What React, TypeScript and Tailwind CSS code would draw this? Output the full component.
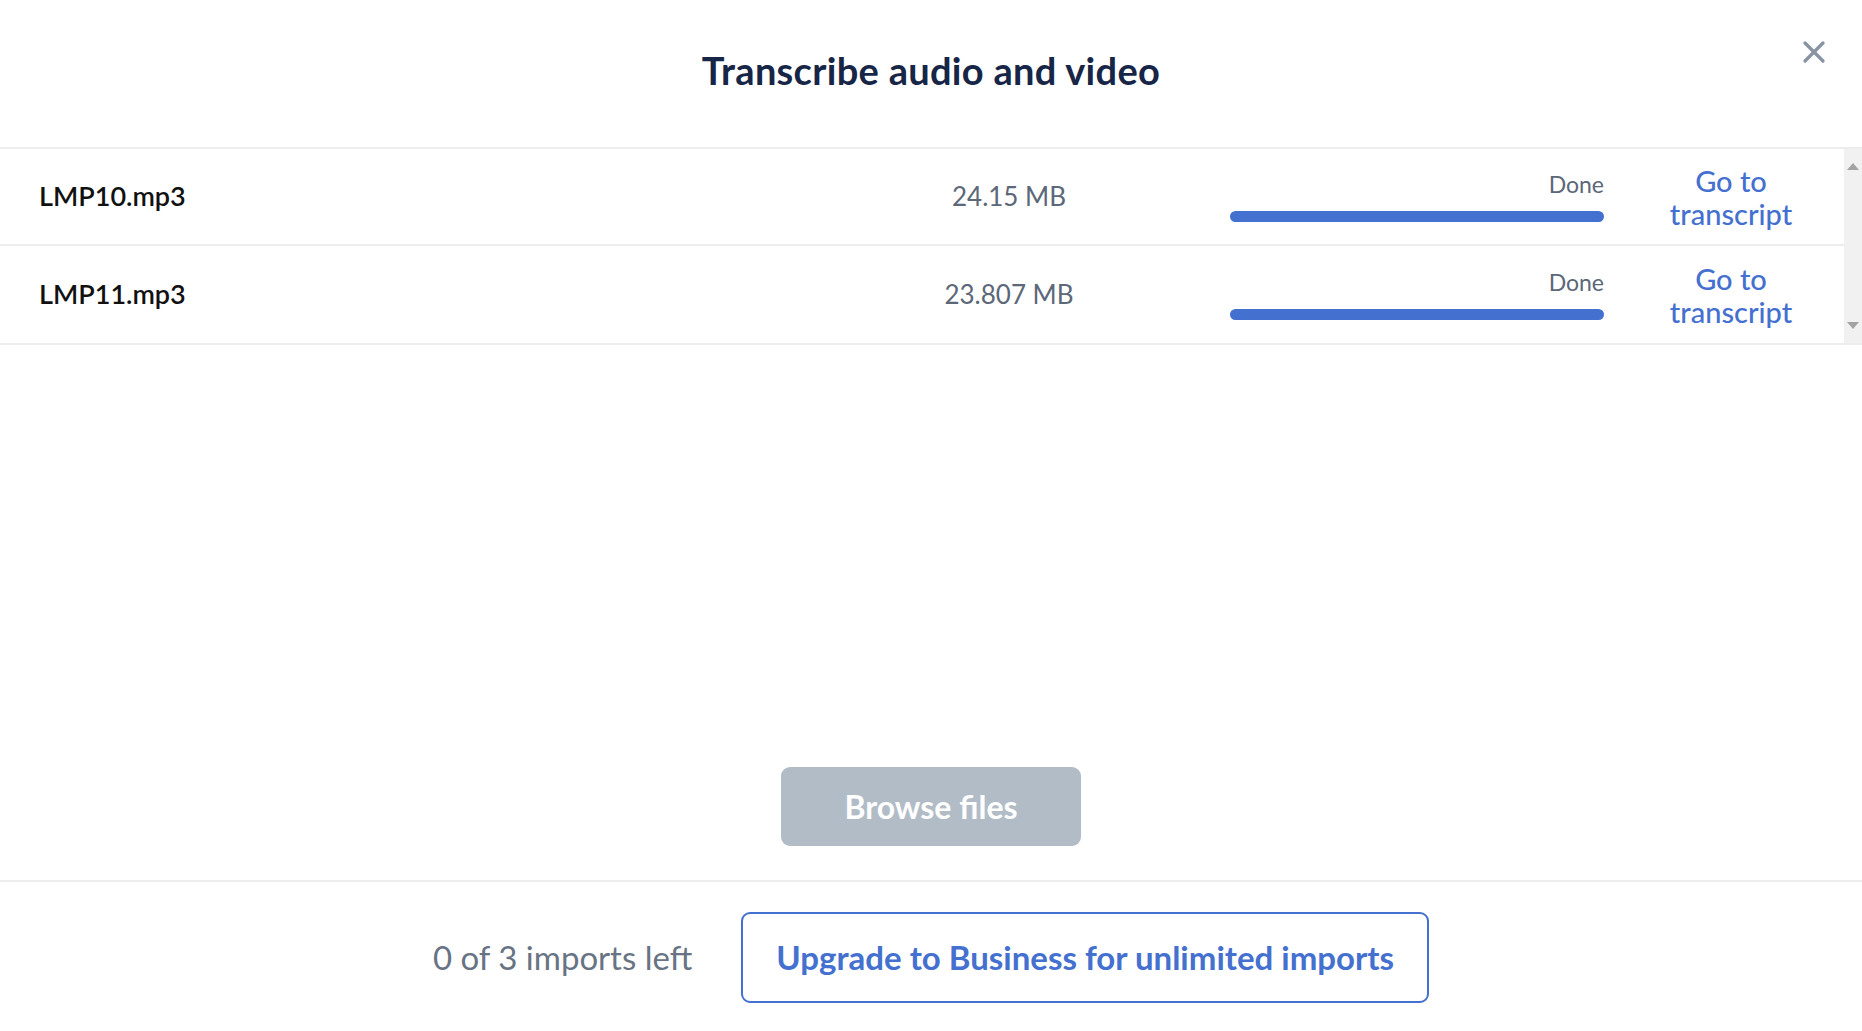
import { X } from "lucide-react";

type Upload = { name: string; size: string };

const uploads: Upload[] = [
  { name: "LMP10.mp3", size: "24.15 MB" },
  { name: "LMP11.mp3", size: "23.807 MB" },
];

export default function App() {
  return (
    <div className="h-[1031px] w-full bg-white flex flex-col font-['Lato',sans-serif]">
      {/* Header */}
      <div className="relative h-[149px] shrink-0 flex items-start justify-center border-b-2 border-[#ededed]">
        <h1 className="mt-[42px] text-[38px] font-bold tracking-[0.3px] text-[#172647]">
          Transcribe audio and video
        </h1>
        <button className="absolute right-[30px] top-[34px] text-[#8a93a3]">
          <X size={36} strokeWidth={2.2} />
        </button>
      </div>

      {/* File list */}
      <div className="flex h-[196px] shrink-0 border-b-2 border-[#ededed]">
        <div className="flex-1">
          {uploads.map((u, i) => (
            <div
              key={u.name}
              className={
                "flex items-center h-[97px] pl-[39px] " +
                (i === 0 ? "border-b-2 border-[#ededed]" : "")
              }
            >
              <div className="w-[820px] text-[27px] font-semibold text-[#111111]">{u.name}</div>
              <div className="w-[300px] text-center text-[26px] text-[#5c6778]">{u.size}</div>
              <div className="ml-[71px] w-[374px] flex flex-col items-end">
                <span className="text-[23px] leading-[26px] text-[#5c6778]">Done</span>
                <div className="mt-[14px] h-[11px] w-full rounded-full bg-[#4470cf]" />
              </div>
              <a className="ml-[14px] w-[226px] text-center text-[29px] leading-[33px] font-medium text-[#4470cf] cursor-pointer">
                Go to
                <br />
                transcript
              </a>
            </div>
          ))}
        </div>
        {/* scrollbar */}
        <div className="w-[21px] bg-[#f1f1f1] flex flex-col items-center justify-between py-[14px]">
          <svg width="12" height="7" viewBox="0 0 12 7">
            <polygon points="6,0 12,7 0,7" fill="#a3a3a3" />
          </svg>
          <svg width="12" height="7" viewBox="0 0 12 7">
            <polygon points="0,0 12,0 6,7" fill="#a3a3a3" />
          </svg>
        </div>
      </div>

      {/* Browse */}
      <div className="flex-1 flex items-end justify-center pb-[34px]">
        <button className="w-[300px] h-[79px] rounded-[9px] bg-[#b2bcc7] text-white text-[32px] font-bold">
          Browse files
        </button>
      </div>

      {/* Footer */}
      <div className="h-[151px] shrink-0 border-t-2 border-[#ededed] flex items-center justify-center gap-[49px] pt-[2px]">
        <span className="text-[33px] text-[#687384]">0 of 3 imports left</span>
        <button className="h-[91px] px-[33px] rounded-[9px] border-2 border-[#4470cf] text-[33px] font-bold text-[#4470cf]">
          Upgrade to Business for unlimited imports
        </button>
      </div>
    </div>
  );
}
